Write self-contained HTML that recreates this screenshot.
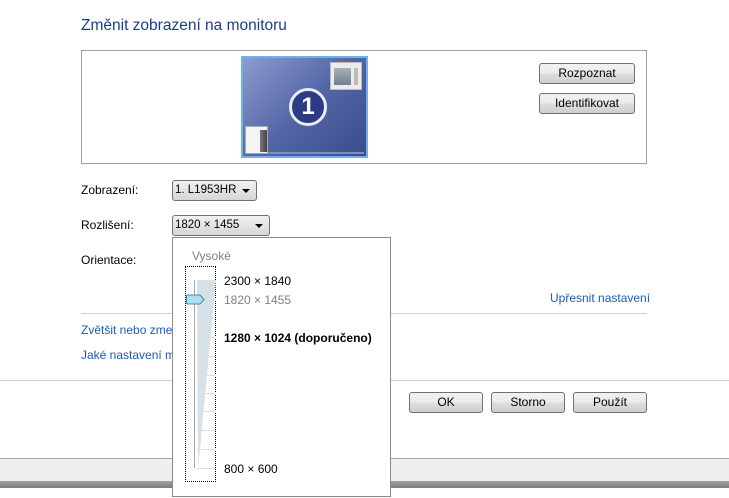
<!DOCTYPE html>
<html><head><meta charset="utf-8"><style>
*{margin:0;padding:0;box-sizing:border-box}
body{width:729px;height:488px;background:#fff;position:relative;overflow:hidden;font-family:"Liberation Sans",sans-serif;font-size:12px;color:#000}
.a{position:absolute;white-space:nowrap}
.btn{position:absolute;border:1px solid #707070;border-radius:3px;background:linear-gradient(#f2f2f2 0%,#ebebeb 50%,#dddddd 51%,#cfcfcf 100%);text-align:center;font-size:12px;line-height:18px}
.sel{position:absolute;border:1px solid #707070;border-radius:3px;background:linear-gradient(#f2f2f2,#e4e4e4 50%,#d6d6d6);font-size:11.5px;line-height:18px;padding-left:2px}
.sel:after{content:"";position:absolute;right:6px;top:8px;border-left:4px solid transparent;border-right:4px solid transparent;border-top:4px solid #000}
.link{color:#1e5ab4}
</style></head><body>
<div class="a" style="left:81px;top:17px;font-size:15.5px;color:#1e3c8c">Změnit zobrazení na monitoru</div>
<div class="a" style="left:81px;top:50px;width:566px;height:114px;border:1px solid #a0a0a0"></div>
<div class="a" style="left:241px;top:56px;width:127px;height:102px;border:2px solid #6fb2ea;background:linear-gradient(135deg,#8c9ccf 0%,#5466a6 50%,#3a4c8c 100%)">
 <div class="a" style="left:2px;bottom:2px;width:119px;height:2px;background:#7d8fbf"></div>
 <div class="a" style="left:87px;top:4px;width:32px;height:28px;background:#ececec;border:1px solid #bbb"><div class="a" style="left:3px;top:5px;width:17px;height:17px;background:linear-gradient(#a7b2b8,#6f8090)"></div><div class="a" style="left:23px;top:5px;width:4px;height:17px;background:#bbb"></div></div>
 <div class="a" style="left:2px;top:68px;width:23px;height:28px;background:#f4f4f4;border:1px solid #aaa"><div class="a" style="left:14px;top:3px;width:7px;height:22px;background:linear-gradient(90deg,#777,#444)"></div></div>
 <div class="a" style="left:46px;top:30px;width:38px;height:38px;border-radius:50%;background:#2d3a84;border:3px solid #e8ecf6;color:#fff;font-size:24px;font-weight:bold;text-align:center;line-height:32px">1</div>
</div>
<div class="btn" style="left:539px;top:63px;width:96px;height:21px">Rozpoznat</div>
<div class="btn" style="left:539px;top:93px;width:96px;height:21px">Identifikovat</div>
<div class="a" style="left:81px;top:183px">Zobrazení:</div>
<div class="sel" style="left:172px;top:180px;width:85px;height:21px">1. L1953HR</div>
<div class="a" style="left:81px;top:218px">Rozlišení:</div>
<div class="sel" style="left:172px;top:215px;width:98px;height:21px">1820 × 1455</div>
<div class="a" style="left:81px;top:253px">Orientace:</div>
<div class="a link" style="left:550px;top:291px">Upřesnit nastavení</div>
<div class="a" style="left:81px;top:313px;width:566px;height:1px;background:#cfcfcf"></div>
<div class="a link" style="left:81px;top:323px">Zvětšit nebo zmenšit text a další položky</div>
<div class="a link" style="left:81px;top:348px">Jaké nastavení monitoru mám zvolit?</div>
<div class="a" style="left:0;top:380px;width:729px;height:1px;background:#cfcfcf"></div>
<div class="btn" style="left:409px;top:392px;width:74px;height:21px">OK</div>
<div class="btn" style="left:491px;top:392px;width:74px;height:21px">Storno</div>
<div class="btn" style="left:573px;top:392px;width:74px;height:21px">Použít</div>
<div class="a" style="left:0;top:458px;width:729px;height:23px;background:#f0eeee;border-top:1px solid #a8a8a8"></div>
<div class="a" style="left:0;top:481px;width:729px;height:7px;background:linear-gradient(#a0a0a0,#7c7c7c)"></div>
<!-- popup -->
<div class="a" style="left:172px;top:237px;width:219px;height:260px;background:#fff;border:1px solid #8a8a8a">
 <div class="a" style="left:19px;top:11px;color:#808080">Vysoké</div>
 <div class="a" style="left:12px;top:28px;width:31px;height:216px;border:1px dotted #000"></div>
 <svg class="a" style="left:0;top:0" width="219" height="260">
  <polygon points="24,42 43,42 25,232" fill="#d8e1e8"/>
  <line x1="21.5" y1="42" x2="21.5" y2="230" stroke="#a8a8a8"/>
  <g stroke="#d8e1e8">
   <line x1="24" y1="43.5" x2="43" y2="43.5"/><line x1="24" y1="61.5" x2="43" y2="61.5"/><line x1="24" y1="80.5" x2="43" y2="80.5"/><line x1="24" y1="99.5" x2="43" y2="99.5"/><line x1="24" y1="118.5" x2="43" y2="118.5"/><line x1="24" y1="137.5" x2="43" y2="137.5"/><line x1="24" y1="155.5" x2="43" y2="155.5"/><line x1="24" y1="173.5" x2="43" y2="173.5"/><line x1="24" y1="192.5" x2="43" y2="192.5"/><line x1="24" y1="211.5" x2="43" y2="211.5"/><line x1="24" y1="230.5" x2="43" y2="230.5"/>
  </g>
  <path d="M15,57 H27 L31,61.5 L27,66 H15 Q13.5,66 13.5,64.5 V58.5 Q13.5,57 15,57Z" fill="#aee0f4" stroke="#3c8ab0"/>
 </svg>
 <div class="a" style="left:51px;top:36px">2300 × 1840</div>
 <div class="a" style="left:51px;top:55px;color:#808080">1820 × 1455</div>
 <div class="a" style="left:51px;top:93px;font-weight:bold">1280 × 1024 (doporučeno)</div>
 <div class="a" style="left:51px;top:224px">800 × 600</div>
</div>
</body></html>
